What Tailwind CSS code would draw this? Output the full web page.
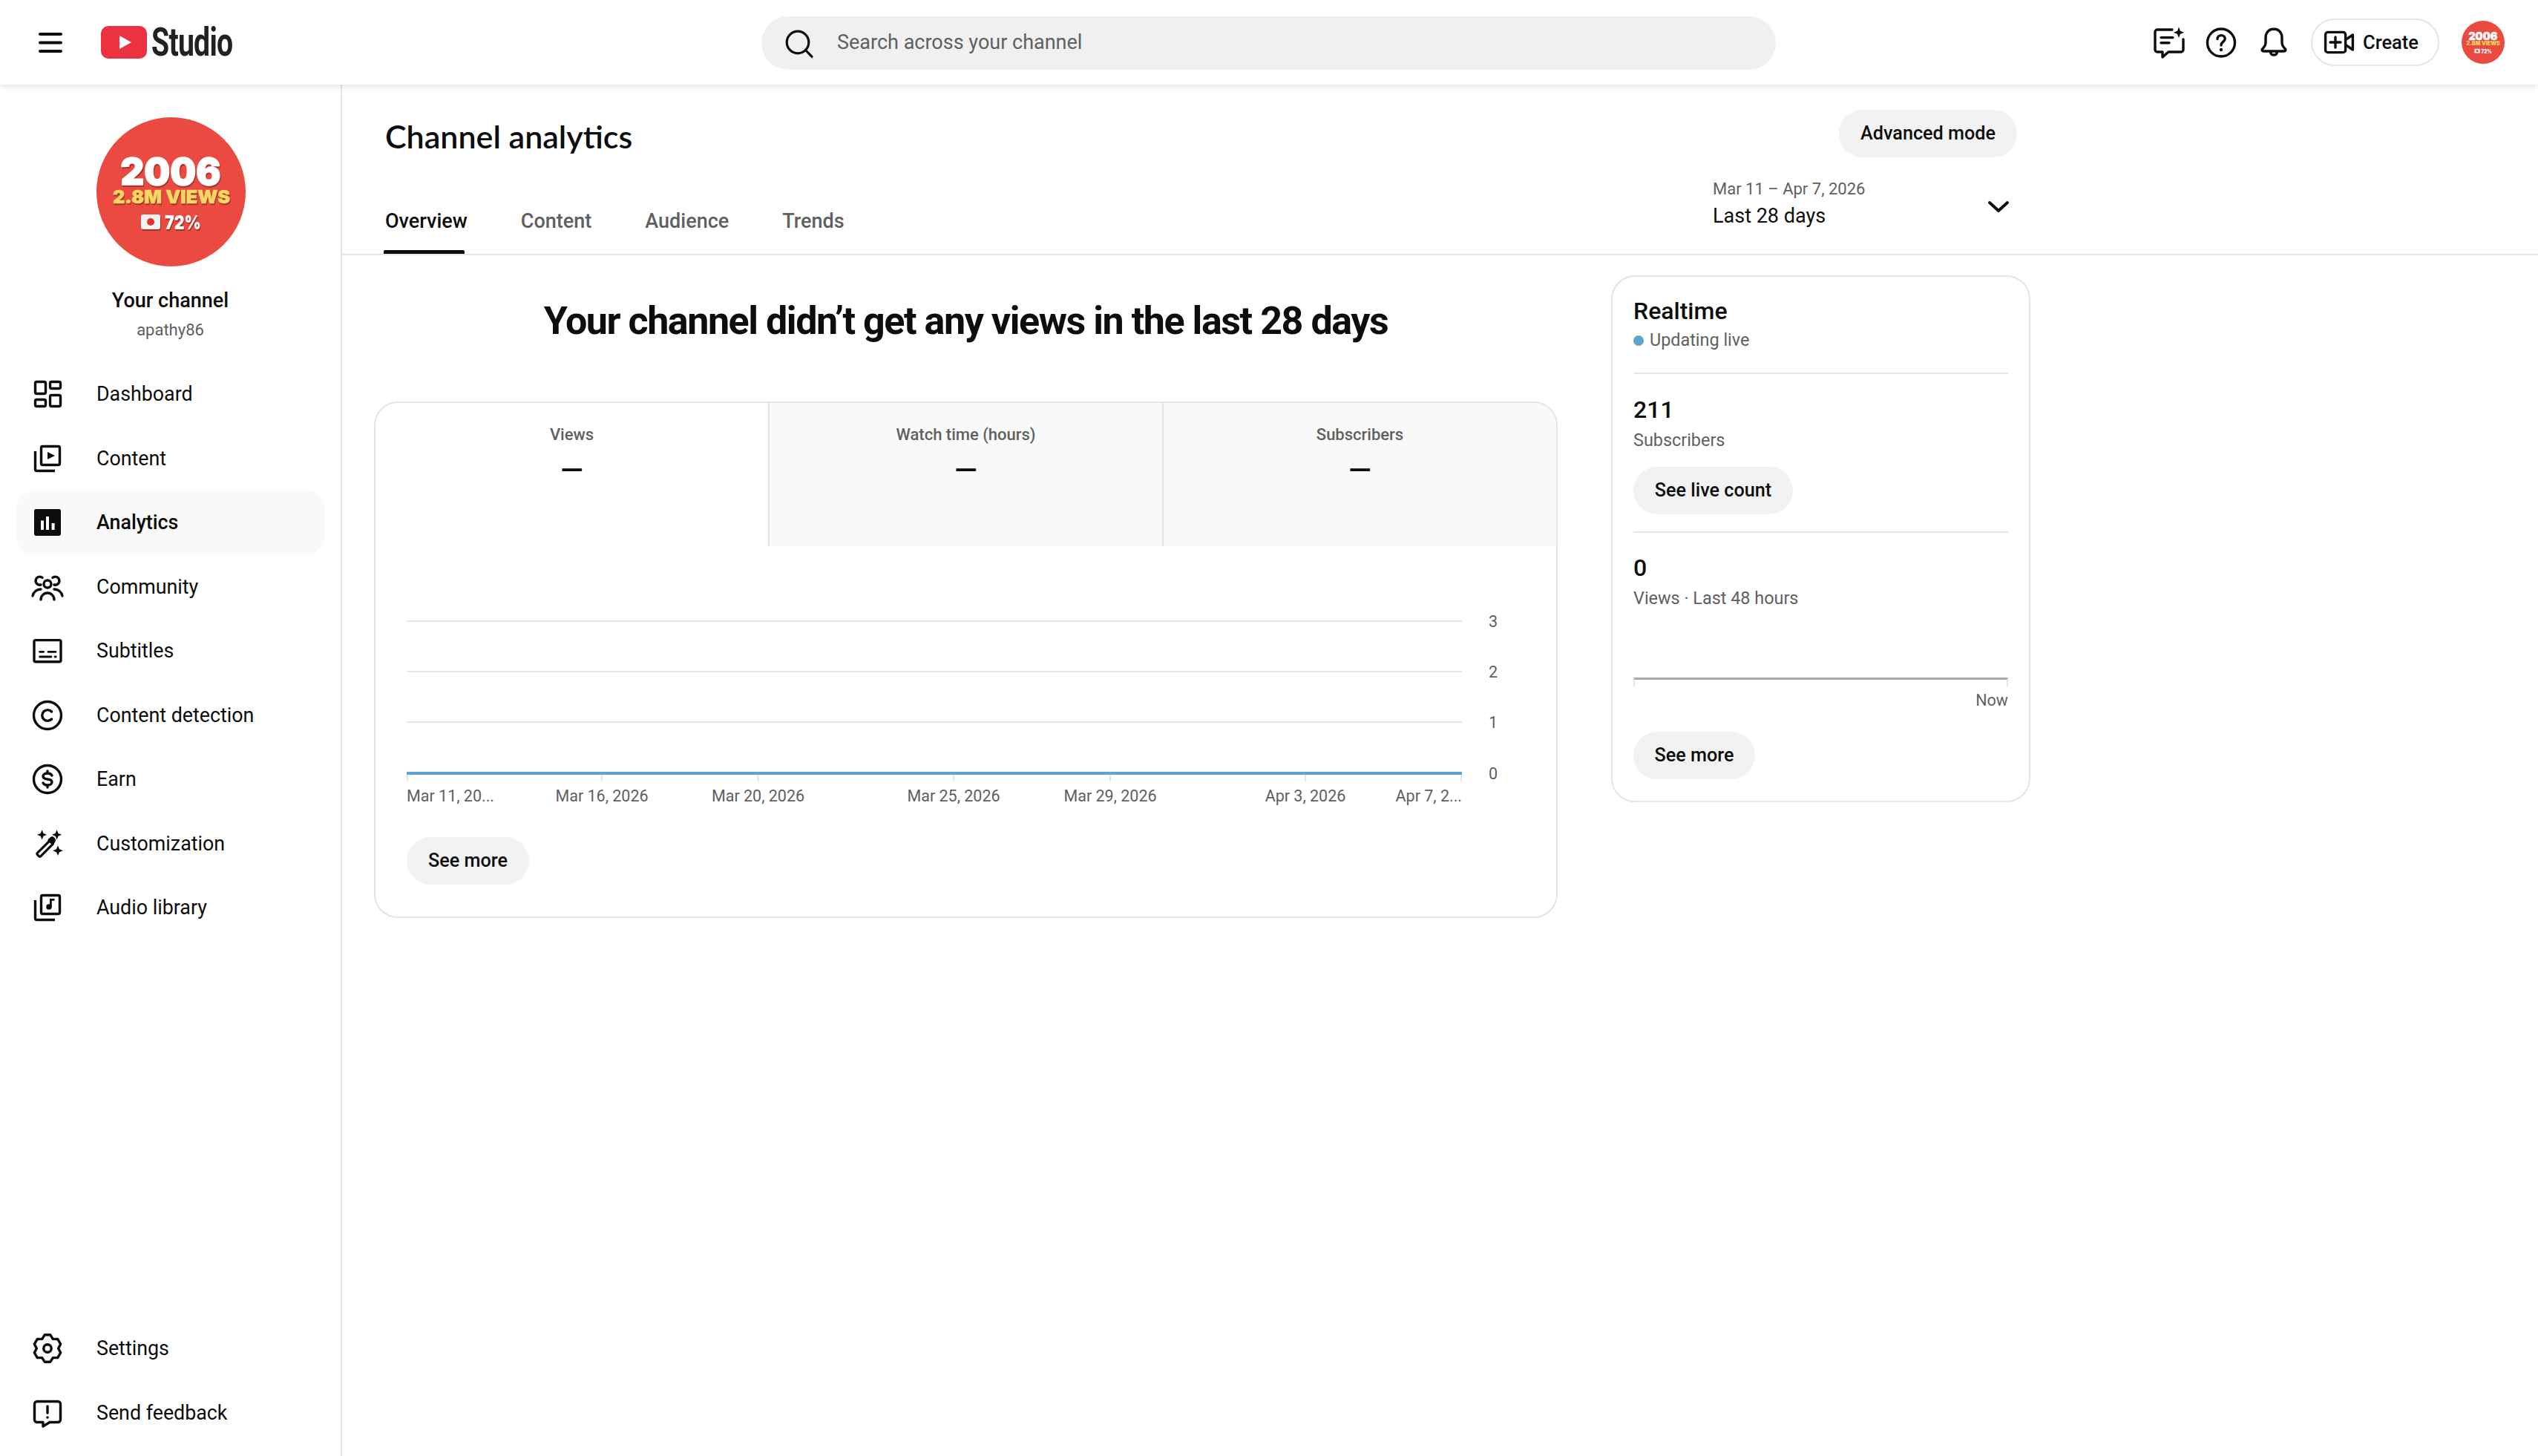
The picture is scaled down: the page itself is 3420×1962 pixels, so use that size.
<!DOCTYPE html>
<html lang="en">
<head>
    <meta charset="UTF-8">
    <title>Channel analytics - YouTube Studio</title>
    <script src="https://cdn.jsdelivr.net/npm/@tailwindcss/browser@4"></script>
</head>
<body class="w-[3420px] h-[1962px] overflow-hidden bg-white text-[#0d0d0d] font-[Roboto,sans-serif] flex flex-col">

    <!-- Top bar -->
    <header class="relative z-10 h-[114px] shrink-0 flex items-center bg-white shadow-[0_2px_8px_rgba(0,0,0,0.12)]">
        <svg class="ml-[52px] w-[32px] h-[32px]" viewBox="0 0 32 32" fill="none" stroke="#0d0d0d" stroke-width="4" stroke-linecap="round"><path d="M2 5h28M2 16.500h28M2 28h28"/></svg>
        <svg class="ml-[52px] w-[62px] h-[44px]" viewBox="0 0 62 44"><rect width="62" height="44" rx="10" fill="#ec3140"/><path d="M25 13l16 9-16 9z" fill="#fff"/></svg>
        <div class="ml-[6px] w-[108px] h-[50px] flex items-center overflow-visible">
            <span class="origin-left scale-x-[0.725] text-[54px] leading-[50px] font-bold text-[#212121] tracking-[-1px]">Studio</span>
        </div>

        <div class="ml-[714px] mt-[1px] w-[1367px] h-[72px] rounded-full bg-[#f0f0f0] flex items-center pl-[26px]">
            <svg class="w-[48px] h-[48px]" viewBox="0 0 24 24" fill="none" stroke="#0d0d0d" stroke-width="1.600" stroke-linecap="round"><circle cx="11.500" cy="11.500" r="7.400"/><path d="M17 17l4 4.200"/></svg>
            <span class="ml-[28px] text-[27px] text-[#606060]">Search across your channel</span>
        </div>

        <div class="ml-auto pr-[45px] flex items-center">
            <svg class="w-[48px] h-[48px]" viewBox="0 0 24 24" fill="none" stroke="#0d0d0d" stroke-width="1.700" stroke-linecap="round" stroke-linejoin="round"><path d="M14 3.500H4a1.500 1.500 0 0 0-1.500 1.500v12A1.500 1.500 0 0 0 4 18.500h3.500V22l4-3.500H20a1.500 1.500 0 0 0 1.500-1.500V10"/><path d="M6.500 8.800h8M6.500 12.400h5.500"/><path d="M18.500 1.800l1 2.600 2.600 1-2.600 1-1 2.600-1-2.600-2.600-1 2.600-1z" fill="#0d0d0d" stroke="none"/></svg>
            <svg class="ml-[22px] w-[48px] h-[48px]" viewBox="0 0 24 24" fill="none" stroke="#0d0d0d" stroke-width="1.700" stroke-linecap="round"><circle cx="12" cy="12.250" r="9.250"/><path d="M9.500 9.800c0-1.500 1.100-2.500 2.600-2.500s2.500 1 2.500 2.300c0 2-2.600 2-2.600 4.400"/><circle cx="12" cy="17" r="1.100" fill="#0d0d0d" stroke="none"/></svg>
            <svg class="ml-[23px] w-[48px] h-[48px]" viewBox="0 0 24 24" fill="none" stroke="#0d0d0d" stroke-width="1.700" stroke-linecap="round" stroke-linejoin="round"><path d="M12 3c-3.300 0-5.500 2.500-5.500 5.800v3.400c0 1.800-1 3-2.200 4.300-.5.600-.2 1.500.6 1.500h14.200c.8 0 1.100-.9.600-1.500-1.200-1.300-2.200-2.500-2.200-4.300V8.800C17.500 5.500 15.300 3 12 3z"/><path d="M9.800 18.800a2.250 2.250 0 0 0 4.400 0"/></svg>
            <div class="ml-[26px] w-[173px] h-[64px] rounded-full border-2 border-[#e5e5e5] flex items-center pl-[12px]">
                <svg class="w-[48px] h-[48px]" viewBox="0 0 24 24" fill="none" stroke="#0d0d0d" stroke-width="1.700" stroke-linecap="round" stroke-linejoin="round"><rect x="2.800" y="5.200" width="13.500" height="13.600" rx="1.600"/><path d="M16.500 10.200l4.700-3.200v10l-4.700-3.200"/><path d="M9.500 8.500v7M6 12h7"/></svg>
                <span class="ml-[8px] text-[25.500px] font-medium">Create</span>
            </div>
            <svg class="ml-[30px] w-[58px] h-[58px]" viewBox="0 0 201 201">
                <circle cx="100.500" cy="100.500" r="100.500" fill="#ea4a3f"/>
                <text x="100" y="91" text-anchor="middle" textLength="135" lengthAdjust="spacingAndGlyphs" font-family="Inter" font-weight="900" font-size="50" fill="#fff" stroke="#fff" stroke-width="1.500">2006</text>
                <text x="101" y="116" text-anchor="middle" textLength="158" lengthAdjust="spacingAndGlyphs" font-family="Inter" font-weight="900" font-size="25" fill="#f5d862">2.8M VIEWS</text>
                <rect x="60" y="131" width="26" height="20" rx="3" fill="#f2f2f2"/><circle cx="73" cy="141" r="5" fill="#e0342f"/>
                <text x="92" y="151" textLength="49" lengthAdjust="spacingAndGlyphs" font-family="Inter" font-weight="900" font-size="26" fill="#fff">72%</text>
            </svg>
        </div>
    </header>

    <div class="flex-1 flex min-h-0">

        <!-- Sidebar -->
        <aside class="w-[461px] shrink-0 border-r-2 border-[#e5e5e5] flex flex-col items-center pt-[44px] pb-[15px]">
            <svg class="ml-[2px] w-[201px] h-[201px]" viewBox="0 0 201 201">
                <circle cx="100.500" cy="100.500" r="100.500" fill="#ea4a3f"/>
                <g class="drop-shadow-[1px_2px_0_rgba(90,20,20,0.45)]">
                    <text x="100" y="91" text-anchor="middle" textLength="135" lengthAdjust="spacingAndGlyphs" font-family="Inter" font-weight="900" font-size="50" fill="#fff" stroke="#fff" stroke-width="1.500">2006</text>
                    <text x="101" y="116" text-anchor="middle" textLength="158" lengthAdjust="spacingAndGlyphs" font-family="Inter" font-weight="900" font-size="25" fill="#f5d862" stroke="#f5d862" stroke-width="0.500">2.8M VIEWS</text>
                    <rect x="60" y="131" width="26" height="20" rx="3" fill="#f2f2f2"/><circle cx="73" cy="141" r="5" fill="#e0342f"/>
                    <text x="92" y="151" textLength="49" lengthAdjust="spacingAndGlyphs" font-family="Inter" font-weight="900" font-size="26" fill="#fff">72%</text>
                </g>
            </svg>
            <p class="mt-[28px] h-[36px] leading-[36px] text-[27px] font-medium">Your channel</p>
            <p class="mt-[6px] h-[32px] leading-[32px] text-[22px] text-[#606060]">apathy86</p>

            <nav class="mt-[27px] w-[415px] text-[26.800px]">
                <a class="h-[86.500px] flex items-center pl-[18px] gap-[42px]">
                    <svg class="w-[48px] h-[48px]" viewBox="0 0 24 24" fill="none" stroke="#0d0d0d" stroke-width="1.700"><rect x="3.750" y="3.750" width="7" height="8" rx="1"/><rect x="13.750" y="3.750" width="7" height="4.500" rx="1"/><rect x="3.750" y="15.750" width="7" height="4.500" rx="1"/><rect x="13.750" y="12.750" width="7" height="7.500" rx="1"/></svg>
                    <span>Dashboard</span>
                </a>
                <a class="h-[86.500px] flex items-center pl-[18px] gap-[42px]">
                    <svg class="w-[48px] h-[48px]" viewBox="0 0 24 24" fill="none" stroke="#0d0d0d" stroke-width="1.700"><rect x="7.750" y="3.750" width="12.500" height="12.500" rx="1"/><path d="M3.750 7v12.250a1 1 0 0 0 1 1H17"/><path d="M12 7.500l5 2.500-5 2.500z" fill="#0d0d0d" stroke="none"/></svg>
                    <span>Content</span>
                </a>
                <a class="h-[86.500px] flex items-center pl-[18px] gap-[42px] rounded-[24px] bg-[#f9f9f9] font-medium">
                    <svg class="w-[48px] h-[48px]" viewBox="0 0 24 24"><rect x="3" y="3" width="18" height="18" rx="1.200" fill="#0d0d0d"/><path d="M7.500 10.800h2v6.200h-2zM11 8h2v9h-2zM14.800 12.500h2V17h-2z" fill="#fff"/></svg>
                    <span>Analytics</span>
                </a>
                <a class="h-[86.500px] flex items-center pl-[18px] gap-[42px]">
                    <svg class="w-[48px] h-[48px]" viewBox="0 0 24 24" fill="none" stroke="#0d0d0d" stroke-width="1.700" stroke-linecap="round"><circle cx="12" cy="10" r="2.500"/><path d="M7.500 20.500a4.500 4.500 0 0 1 9 0"/><path d="M8.500 5.700A2.750 2.750 0 1 0 7.500 10.500"/><path d="M15.500 5.700A2.750 2.750 0 1 1 16.500 10.500"/><path d="M2 18a5.500 5.500 0 0 1 5.500-4.500"/><path d="M22 18a5.500 5.500 0 0 0-5.500-4.500"/></svg>
                    <span>Community</span>
                </a>
                <a class="h-[86.500px] flex items-center pl-[18px] gap-[42px]">
                    <svg class="w-[48px] h-[48px]" viewBox="0 0 24 24" fill="none" stroke="#0d0d0d" stroke-width="1.700" stroke-linecap="round"><rect x="3" y="4.800" width="18" height="14.600" rx="1"/><path d="M6.800 12.700h2.500M12.500 12.700h5M6.800 16h7.700M17 16h.6" stroke-width="1.400"/></svg>
                    <span>Subtitles</span>
                </a>
                <a class="h-[86.500px] flex items-center pl-[18px] gap-[42px]">
                    <svg class="w-[48px] h-[48px]" viewBox="0 0 24 24" fill="none" stroke="#0d0d0d" stroke-width="1.700" stroke-linecap="round"><circle cx="12" cy="12" r="9.250"/><path d="M14.800 9.500a3.700 3.700 0 1 0 0 5"/></svg>
                    <span>Content detection</span>
                </a>
                <a class="h-[86.500px] flex items-center pl-[18px] gap-[42px]">
                    <svg class="w-[48px] h-[48px]" viewBox="0 0 24 24" fill="none" stroke="#0d0d0d" stroke-width="1.700" stroke-linecap="round"><circle cx="12" cy="12" r="9.250"/><path d="M15 9.500c-.5-1-1.500-1.500-3-1.500-1.700 0-3 .8-3 2s1.300 1.800 3 2 3 .8 3 2-1.300 2-3 2c-1.500 0-2.500-.5-3-1.500M12 6.500V8M12 16v1.500"/></svg>
                    <span>Earn</span>
                </a>
                <a class="h-[86.500px] flex items-center pl-[18px] gap-[42px]">
                    <svg class="w-[48px] h-[48px]" viewBox="0 0 24 24" fill="none" stroke="#0d0d0d" stroke-width="1.600" stroke-linejoin="round"><path d="M5.200 18.200l8.300-8.300 2.200 2.200-8.300 8.300a.8.800 0 0 1-1.100 0l-1.100-1.100a.8.800 0 0 1 0-1.100z"/><path d="M13 9.600l1.300-1.300a1.100 1.100 0 0 1 1.600 0l.5.5a1.100 1.100 0 0 1 0 1.600L15.500 12z" fill="#0d0d0d"/><path d="M8.300 2.600l.95 2.350 2.350.95-2.350.95-.95 2.350-.95-2.350-2.350-.95 2.350-.95zM18.300 2.600l.95 2.350 2.350.95-2.350.95-.95 2.350-.95-2.350-2.350-.95 2.350-.95zM19 13.200l1 2.400 2.400 1-2.400 1-1 2.400-1-2.400-2.400-1 2.400-1z" fill="#0d0d0d" stroke="none"/></svg>
                    <span>Customization</span>
                </a>
                <a class="h-[86.500px] flex items-center pl-[18px] gap-[42px]">
                    <svg class="w-[48px] h-[48px]" viewBox="0 0 24 24" fill="none" stroke="#0d0d0d" stroke-width="1.700"><rect x="7.750" y="3.750" width="12.500" height="12.500" rx="1"/><path d="M3.750 7v12.250a1 1 0 0 0 1 1H17"/><circle cx="13" cy="11.500" r="1.900" fill="#0d0d0d" stroke="none"/><path d="M14.200 11.500V6.700h2.600" stroke-width="1.400"/></svg>
                    <span>Audio library</span>
                </a>
            </nav>

            <div class="mt-auto w-[415px] text-[26.800px]">
                <a class="h-[86.500px] flex items-center pl-[18px] gap-[42px]">
                    <svg class="w-[48px] h-[48px]" viewBox="0 0 24 24" fill="none" stroke="#0d0d0d" stroke-width="1.700" stroke-linejoin="round"><path d="M10.070 2.900h3.860l1.720 2.780 3.260.1 1.930 3.350L19.300 12l1.540 2.870-1.930 3.350-3.260.1-1.720 2.780h-3.860l-1.720-2.780-3.260-.1-1.930-3.350L4.700 12 3.160 9.130l1.930-3.350 3.260-.1z"/><circle cx="12" cy="12" r="2.600"/></svg>
                    <span>Settings</span>
                </a>
                <a class="h-[86.500px] flex items-center pl-[18px] gap-[42px]">
                    <svg class="w-[48px] h-[48px]" viewBox="0 0 24 24" fill="none" stroke="#0d0d0d" stroke-width="1.700" stroke-linejoin="round" stroke-linecap="round"><path d="M5 4.250h14a1.750 1.750 0 0 1 1.750 1.750v10.500A1.750 1.750 0 0 1 19 18.250h-5.500L9 21v-2.750H5a1.750 1.750 0 0 1-1.750-1.750V6A1.750 1.750 0 0 1 5 4.250z"/><path d="M12 7.500v4.500"/><circle cx="12" cy="15" r=".9" fill="#0d0d0d" stroke="none"/></svg>
                    <span>Send feedback</span>
                </a>
            </div>
        </aside>

        <!-- Main column -->
        <main class="flex-1 min-w-0">
            <section class="h-[230px] border-b-2 border-[#e5e5e5]">
                <div class="w-[2257px] h-full pl-[58px] flex justify-between">
                    <div class="flex flex-col">
                        <h1 class="mt-[40px] h-[60px] leading-[60px] text-[43px] font-semibold font-[Lato,sans-serif]">Channel analytics</h1>
                        <div class="mt-auto flex gap-[72px] text-[27px] font-medium text-[#606060]">
                            <a class="relative h-[88px] flex items-center text-[#0d0d0d]">Overview<span class="absolute left-[-2px] bottom-0 w-[109px] h-[5px] rounded-t-[2px] bg-[#0d0d0d]"></span></a>
                            <a class="h-[88px] flex items-center">Content</a>
                            <a class="h-[88px] flex items-center">Audience</a>
                            <a class="h-[88px] flex items-center">Trends</a>
                        </div>
                    </div>
                    <div class="flex flex-col items-end">
                        <button class="mt-[34px] w-[240px] h-[64px] rounded-full bg-[#f2f2f2] text-[25.200px] font-medium">Advanced mode</button>
                        <div class="mt-[27px] w-[410px] flex items-center justify-between pr-[8px]">
                            <div>
                                <p class="h-[32px] leading-[32px] text-[22px] text-[#606060]">Mar 11 – Apr 7, 2026</p>
                                <p class="mt-[2px] h-[36px] leading-[36px] text-[27px]">Last 28 days</p>
                            </div>
                            <svg class="mt-[8px] w-[34px] h-[34px]" viewBox="0 0 34 34" fill="none" stroke="#0d0d0d" stroke-width="4" stroke-linecap="round" stroke-linejoin="round"><path d="M5 12l12 11 12-11"/></svg>
                        </div>
                    </div>
                </div>
            </section>

            <section class="pl-[43px] pt-[27px] flex items-start gap-[72px]">
                <div class="w-[1595px]">
                    <h2 class="h-[123px] flex items-center justify-center text-[52px] font-bold tracking-[-1.450px]">Your channel didn’t get any views in the last 28 days</h2>

                    <div class="mt-[47px] h-[696px] rounded-[32px] border-2 border-[#e5e5e5] overflow-hidden">
                        <div class="grid grid-cols-[529px_531px_1fr] h-[193px] text-center">
                            <div class="pt-[27px]">
                                <p class="h-[32px] leading-[32px] text-[22px] font-medium text-[#606060]">Views</p>
                                <p class="mt-[8px] h-[48px] leading-[48px] text-[40px] font-medium">—</p>
                            </div>
                            <div class="pt-[27px] bg-[#f9f9f9] border-l-2 border-[#e5e5e5]">
                                <p class="h-[32px] leading-[32px] text-[22px] font-medium text-[#606060]">Watch time (hours)</p>
                                <p class="mt-[8px] h-[48px] leading-[48px] text-[40px] font-medium">—</p>
                            </div>
                            <div class="pt-[27px] bg-[#f9f9f9] border-l-2 border-[#e5e5e5]">
                                <p class="h-[32px] leading-[32px] text-[22px] font-medium text-[#606060]">Subscribers</p>
                                <p class="mt-[8px] h-[48px] leading-[48px] text-[40px] font-medium">—</p>
                            </div>
                        </div>

                        <svg class="w-[1591px] h-[360px]" viewBox="506 736 1591 360" font-family="Roboto" font-size="21.500" fill="#606060">
                            <g stroke="#e5e5e5" stroke-width="2">
                                <path d="M548 837H1970M548 905H1970M548 973H1970"/>
                                <path d="M549 1042V1053M811 1042V1053M1021.500 1042V1053M1285 1042V1053M1496 1042V1053M1759 1042V1053M1969 1042V1053"/>
                            </g>
                            <rect x="548" y="1040" width="1422" height="4" fill="#5ba5cf"/>
                            <text x="548" y="1080">Mar 11, 20...</text>
                            <text x="811" y="1080" text-anchor="middle">Mar 16, 2026</text>
                            <text x="1021.500" y="1080" text-anchor="middle">Mar 20, 2026</text>
                            <text x="1285" y="1080" text-anchor="middle">Mar 25, 2026</text>
                            <text x="1496" y="1080" text-anchor="middle">Mar 29, 2026</text>
                            <text x="1759" y="1080" text-anchor="middle">Apr 3, 2026</text>
                            <text x="1970" y="1080" text-anchor="end">Apr 7, 2...</text>
                            <text x="2012" y="845" text-anchor="middle">3</text>
                            <text x="2012" y="913" text-anchor="middle">2</text>
                            <text x="2012" y="981" text-anchor="middle">1</text>
                            <text x="2012" y="1050" text-anchor="middle">0</text>
                        </svg>

                        <button class="block ml-[42px] mt-[32px] w-[165px] h-[64px] rounded-full bg-[#f2f2f2] text-[25.200px] font-medium">See more</button>
                    </div>
                </div>

                <!-- Realtime card -->
                <aside class="w-[565px] h-[710px] rounded-[32px] border-2 border-[#e5e5e5] px-[28px] pt-[26px]">
                    <h3 class="h-[40px] leading-[40px] text-[32px] font-medium">Realtime</h3>
                    <p class="mt-[4px] h-[32px] flex items-center text-[23.400px] text-[#606060]"><span class="w-[14px] h-[14px] rounded-full bg-[#5ba5cf] mr-[8px]"></span>Updating live</p>
                    <div class="mt-[27px] border-t-2 border-[#e5e5e5]"></div>
                    <p class="mt-[28px] h-[40px] leading-[40px] text-[32px] font-medium">211</p>
                    <p class="mt-[5px] h-[32px] leading-[32px] text-[23.400px] text-[#606060]">Subscribers</p>
                    <button class="mt-[20px] block w-[215px] h-[64px] rounded-full bg-[#f2f2f2] text-[25.200px] font-medium">See live count</button>
                    <div class="mt-[23px] border-t-2 border-[#e5e5e5]"></div>
                    <p class="mt-[27px] h-[40px] leading-[40px] text-[32px] font-medium">0</p>
                    <p class="mt-[5px] h-[32px] leading-[32px] text-[23.400px] text-[#606060]">Views · Last 48 hours</p>
                    <div class="mt-[91px] h-[12px] border-t-[3px] border-t-[#aaaaaa] border-x-2 border-x-[#e5e5e5]"></div>
                    <p class="mt-[3px] h-[32px] leading-[32px] text-[21.500px] text-[#606060] text-right">Now</p>
                    <button class="mt-[26px] block w-[164px] h-[64px] rounded-full bg-[#f2f2f2] text-[25.200px] font-medium">See more</button>
                </aside>
            </section>
        </main>
    </div>

</body>
</html>
